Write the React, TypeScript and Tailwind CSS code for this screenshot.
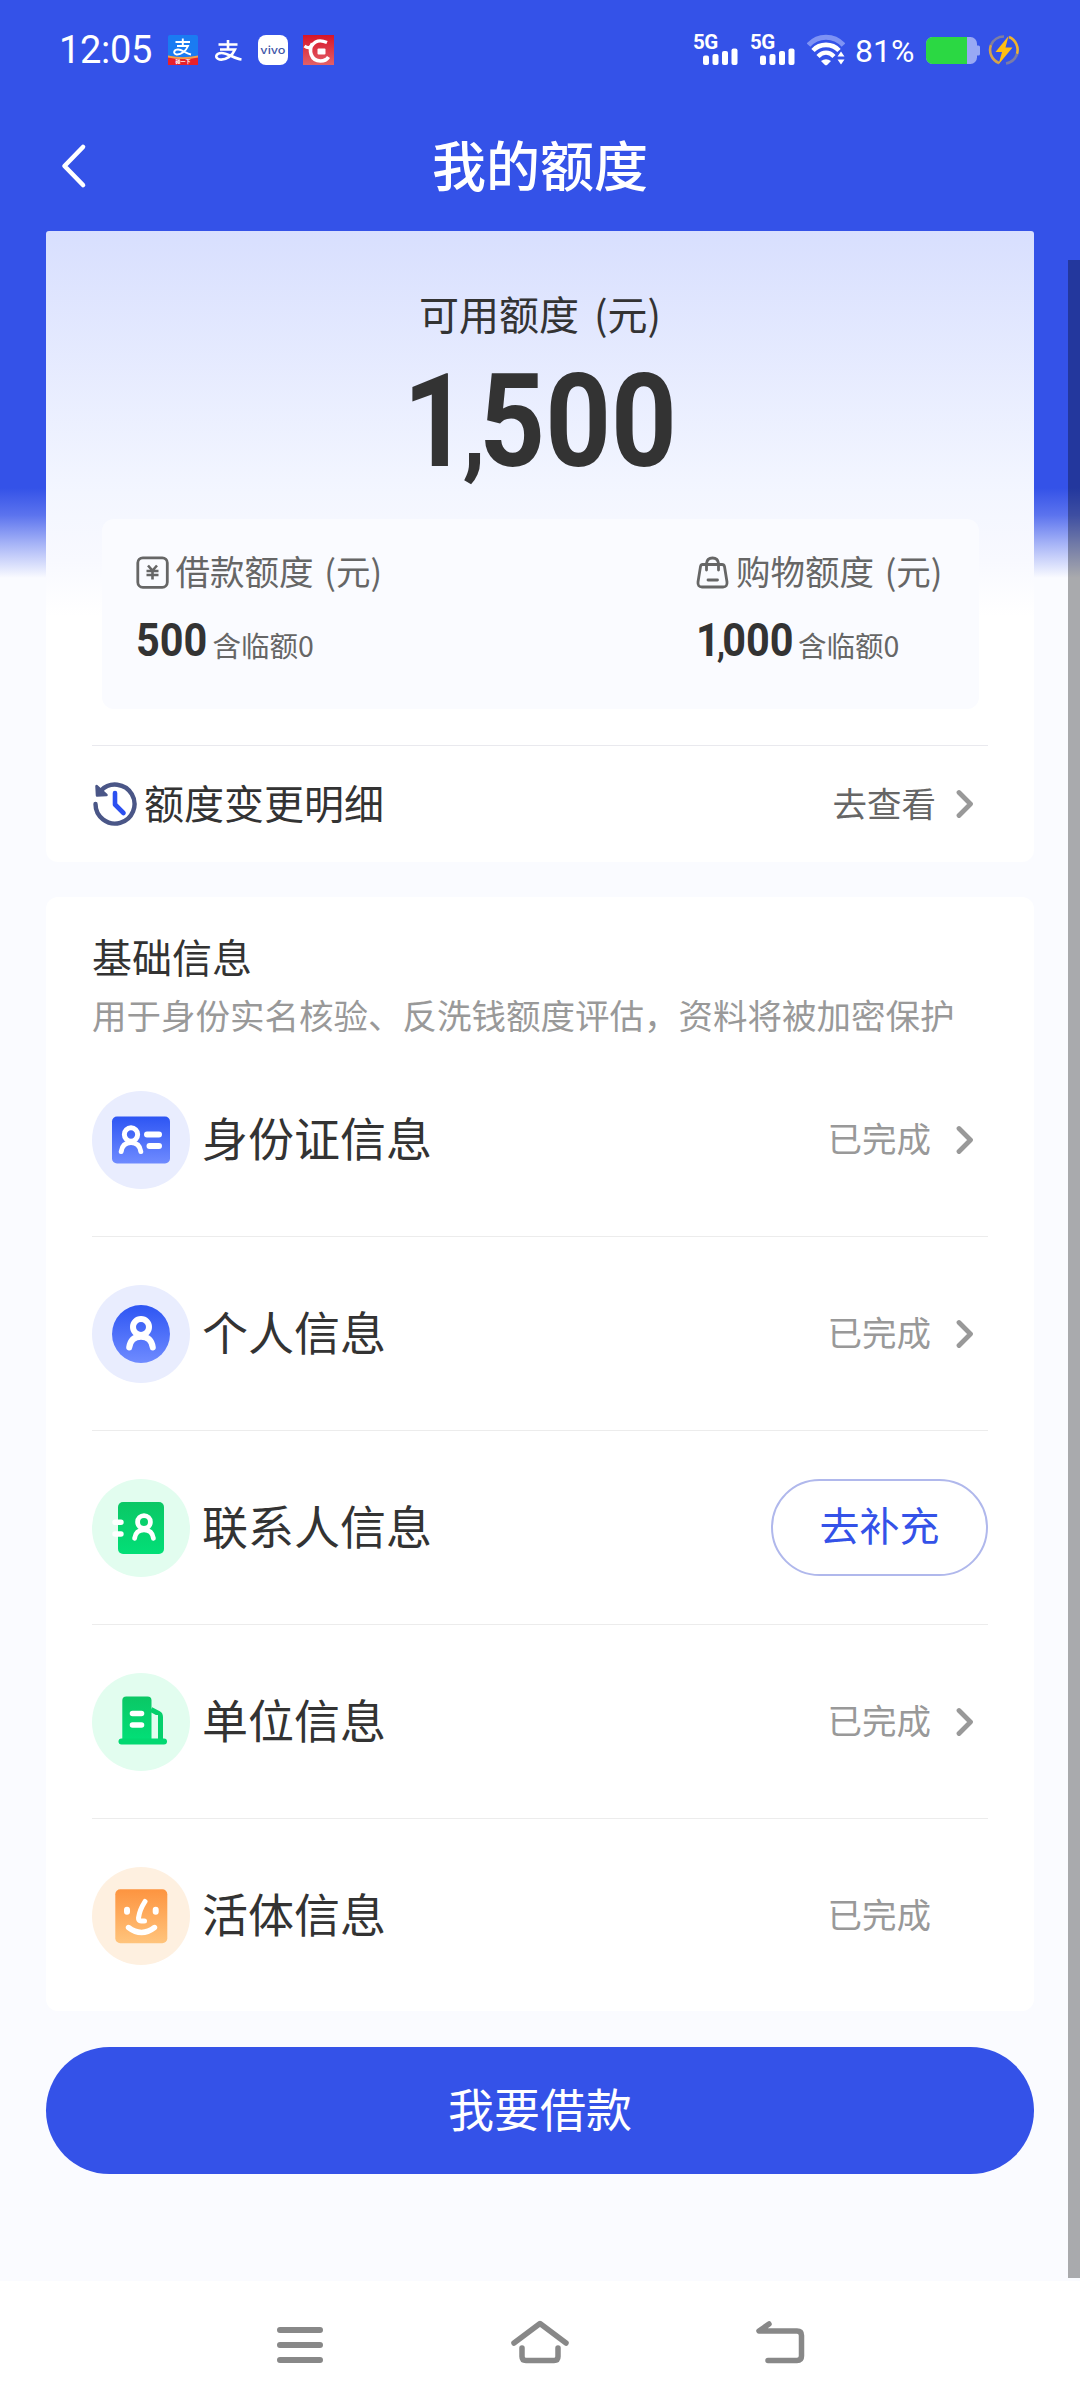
import { ReactNode } from "react";

type InfoRow = {
  label: string,
  icon: ReactNode,
  state: "done" | "todo",
  arrow: boolean,
};

function SignalIcon() {
  return (
    <div className="relative w-[46px] h-[32px]">
      <svg className="w-[46px] h-[32px]" viewBox="0 0 46 32" fill="#fff">
        <rect x="10" y="21.5" width="6" height="9.5" rx="2" />
        <rect x="19.5" y="20" width="6" height="11" rx="2" />
        <rect x="29" y="17" width="6" height="14" rx="2" />
        <rect x="38.5" y="14.5" width="6" height="16.5" rx="2" />
      </svg>
      <span className="absolute left-0 -top-[4px] text-[20.5px] leading-[24px] font-bold tracking-[-0.5px]">5G</span>
    </div>
  );
}

function WifiIcon() {
  return (
    <svg className="w-[38px] h-[32px]" viewBox="0 0 38 32" fill="none">
      <path d="M1.5 11C11 0.5 27 0.5 36.5 11" stroke="#7f93f4" strokeWidth="5" />
      <path d="M6 16.5C13 9 25 9 32 16.5" stroke="#fff" strokeWidth="4.6" />
      <path d="M11 22.5C16 17.5 22 17.5 27 22.5" stroke="#fff" strokeWidth="4.4" />
      <path d="M14 27Q19 23.5 24 27L20.3 30.8Q19 31.8 17.7 30.8Z" fill="#fff" />
      <path d="M30.5 22.5L34 17.5L37.5 22.5ZM30.5 25.5L34 30.5L37.5 25.5Z" fill="#fff" stroke="#3452e8" strokeWidth="1" paintOrder="stroke" />
    </svg>
  );
}

function BatteryIcon() {
  return (
    <svg className="w-[54px] h-[27px]" viewBox="0 0 54 27">
      <defs>
        <clipPath id="battery">
          <rect width="51" height="27" rx="6.5" />
        </clipPath>
      </defs>
      <path d="M50 8.5h2.5q1.5 0 1.5 1.5v7q0 1.5-1.5 1.5H50z" fill="#99a9f4" />
      <g clipPath="url(#battery)">
        <rect width="51" height="27" fill="#99a9f4" />
        <rect width="41" height="27" fill="#2bd843" />
      </g>
    </svg>
  );
}

function ChargeIcon() {
  return (
    <svg className="w-[32px] h-[32px]" viewBox="0 0 32 32" fill="none">
      <path d="M11 29A14 14 0 0 1 3 11" stroke="#d3a24e" strokeWidth="2.6" />
      <path d="M3 11A14 14 0 0 1 16 2.5" stroke="#7f7fa0" strokeWidth="2.6" />
      <path d="M21 3A14 14 0 0 1 29 20" stroke="#f0b32c" strokeWidth="2.6" />
      <path d="M29 20A14 14 0 0 1 18 29.5" stroke="#7b7ca6" strokeWidth="2.6" />
      <path d="M20.5 2L7.5 18H14L10.5 30.5L24.5 13.5H17.5Z" fill="#ffbe12" />
    </svg>
  );
}

function StatusBar() {
  return (
    <div className="flex flex-row items-center h-[100px] pl-[59px] pr-[60px] text-white font-[Roboto,sans-serif]">
      <span className="w-[109px] text-[38px] leading-none tracking-[-0.3px]">12:05</span>
      <div className="flex flex-row items-center gap-[15px]">
        <svg className="w-[30px] h-[30px]" viewBox="0 0 30 30">
          <rect width="30" height="30" rx="2" fill="#1a7bf2" />
          <path d="M0 21Q15 24.5 30 21V30H0Z" fill="#e8202a" />
          <path d="M0 20.5Q15 24 30 20.5V22.5Q15 25.5 0 22.5Z" fill="#f5a04a" />
          <g stroke="#fff" fill="none" strokeWidth="1.9">
            <path d="M7.5 7h14.5M14.8 3.5v7.5M9 11h11C18 16 13 20 8.5 19.5C4.5 18.5 6 14.5 10 14.5C14 14.5 18 18.5 23 19.5" />
          </g>
          <text x="15" y="28.3" fontSize="5" fontWeight="700" textAnchor="middle" fill="#fff" fontFamily="Noto Sans CJK SC, sans-serif">碰一下</text>
        </svg>
        <svg className="w-[30px] h-[30px]" viewBox="0 0 30 30" fill="none" stroke="#fff" strokeWidth="2.6">
          <path d="M5.5 9.5h19M15 5v9.5M7 14.5h15C19.5 20.5 13 25.5 6.5 24.5C1 23 3 18 8.5 18C14.5 18 21 23.5 28.5 24.5" />
        </svg>
        <div className="flex items-center justify-center w-[30px] h-[30px] rounded-[8px] bg-white">
          <span className="scale-x-[1.15] pb-[1px] font-[Inter,sans-serif] text-[11px] leading-[14px] font-medium text-[#3f56a8]">vivo</span>
        </div>
        <svg className="w-[31px] h-[30px]" viewBox="0 0 31 30" fill="none">
          <defs>
            <linearGradient id="red" x1="0" y1="0" x2="0" y2="1">
              <stop offset="0" stopColor="#d81428" />
              <stop offset="1" stopColor="#e26068" />
            </linearGradient>
          </defs>
          <rect width="31" height="30" fill="url(#red)" />
          <path d="M1.5 11Q6 14.5 9 10.5Q14 3 24 7.5" stroke="#fff" strokeWidth="3.2" />
          <path d="M9.5 8.5C5.5 15 7.5 26 17.5 26Q23 26 25.5 22" stroke="#fff" strokeWidth="3.6" />
          <rect x="14.5" y="13.5" width="8" height="6" rx="1" fill="#fff" />
        </svg>
      </div>
      <div className="flex flex-row items-center ml-auto">
        <SignalIcon />
        <div className="w-[11px]" />
        <SignalIcon />
        <div className="w-[11px]" />
        <WifiIcon />
        <span className="w-[81px] pl-[10px] pt-[2px] text-[32px] leading-none">81%</span>
        <BatteryIcon />
        <div className="w-[8px]" />
        <ChargeIcon />
      </div>
    </div>
  );
}

function Chevron() {
  return (
    <svg className="w-[20px] h-[32px]" viewBox="0 0 20 32" fill="none" stroke="#999" strokeWidth="4.8" strokeLinecap="round" strokeLinejoin="round">
      <path d="M3 4.5L14.5 16L3 27.500" />
    </svg>
  );
}

function Person({ x, y, scale }: { x: number, y: number, scale: number }) {
  return (
    <g
      transform={`translate(${x} ${y}) scale(${scale})`}
      fill="none" stroke="#fff" strokeWidth="6" strokeLinecap="round"
    >
      <circle r="8" />
      <path d="M-11.800 20.500C-10.800 13-6.500 9.800 0 9.800S10.800 13 11.800 20.500" />
    </g>
  );
}

function RowIcon({ bg, children }: { bg: string, children: ReactNode }) {
  return (
    <svg className="w-[98px] h-[98px]" viewBox="0 0 98 98">
      <defs>
        <linearGradient id="blue" x1="0" y1="0" x2="0" y2="1">
          <stop offset="0" stopColor="#2d55f3" />
          <stop offset="1" stopColor="#6f8bff" />
        </linearGradient>
        <linearGradient id="green" x1="0" y1="0" x2="0" y2="1">
          <stop offset="0" stopColor="#0bc765" />
          <stop offset="1" stopColor="#02df77" />
        </linearGradient>
        <linearGradient id="orange" x1="0" y1="0" x2="0" y2="1">
          <stop offset="0" stopColor="#fd9440" />
          <stop offset="1" stopColor="#ffc47c" />
        </linearGradient>
      </defs>
      <circle cx="49" cy="49" r="49" fill={bg} />
      {children}
    </svg>
  );
}

const rows: InfoRow[] = [
  {
    label: "身份证信息",
    state: "done",
    arrow: true,
    icon: (
      <RowIcon bg="#e9edfe">
        <rect x="20" y="25.5" width="58" height="47" rx="5" fill="url(#blue)" />
        <Person x={39} y={43.5} scale={0.83} />
        <path d="M55 43.5h12M57.5 55h9.5" stroke="#fff" strokeWidth="6" strokeLinecap="round" />
      </RowIcon>
    ),
  },
  {
    label: "个人信息",
    state: "done",
    arrow: true,
    icon: (
      <RowIcon bg="#e9edfe">
        <circle cx="49" cy="49" r="29" fill="url(#blue)" />
        <Person x={49} y={42} scale={1} />
      </RowIcon>
    ),
  },
  {
    label: "联系人信息",
    state: "todo",
    arrow: false,
    icon: (
      <RowIcon bg="#e2fdef">
        <rect x="26" y="23" width="46" height="52" rx="5" fill="url(#green)" />
        <Person x={52} y={43} scale={0.8} />
        <path d="M23 43.200h6M23 55h6" stroke="#fff" strokeWidth="5.4" strokeLinecap="round" />
      </RowIcon>
    ),
  },
  {
    label: "单位信息",
    state: "done",
    arrow: true,
    icon: (
      <RowIcon bg="#e2fdef">
        <path d="M30.3 67V27.5q0-4 4-4H55.5q4 0 4 4V67z" fill="url(#green)" />
        <path d="M59 36.5L66.5 40.5q2 1.2 2 3.5V67" fill="none" stroke="#05d06c" strokeWidth="5" />
        <rect x="60" y="42" width="6" height="24" fill="#e2fdef" />
        <rect x="26.5" y="65.5" width="48.5" height="6" rx="3" fill="#02d871" />
        <path d="M40.5 40.5h9M40.5 52h9" stroke="#fff" strokeWidth="5.6" strokeLinecap="round" />
      </RowIcon>
    ),
  },
  {
    label: "活体信息",
    state: "done",
    arrow: false,
    icon: (
      <RowIcon bg="#fef0e0">
        <rect x="23.3" y="22.3" width="52" height="54" rx="5" fill="url(#orange)" />
        <g fill="none" stroke="#fff" strokeLinecap="round" strokeLinejoin="round">
          <path d="M35 42.7v2M63.7 42.7v2" strokeWidth="6" />
          <path d="M53 34.5Q47.5 43 46.5 51Q46.3 54 49 54H52.5" strokeWidth="5" />
          <path d="M36.5 60.5Q49.5 70.5 62.5 60.5" strokeWidth="5.4" />
        </g>
      </RowIcon>
    ),
  },
];

function Quota({ icon, title, amountClass, amount }: {
  icon: ReactNode,
  title: string,
  amountClass: string,
  amount: ReactNode,
}) {
  return (
    <div className="flex flex-col">
      <div className="flex flex-row items-center h-[50px] text-[34.5px] leading-none text-[#666]">
        {icon}
        <span className="pl-[7px] pb-[4px] [word-spacing:3px]">{title}</span>
      </div>
      <div className="flex flex-row items-baseline pt-[19px]">
        <div className={amountClass}>
          <span className="inline-block origin-left scale-x-[0.9] font-[Roboto,sans-serif] font-bold text-[46px] leading-[48px] text-[#333]">
            {amount}
          </span>
        </div>
        <span className="relative top-[1px] text-[28.5px] leading-none text-[#666]">含临额0</span>
      </div>
    </div>
  );
}

export default function App() {
  return (
    <div
      className="
        relative flex flex-col w-[1080px] h-[2408px] overflow-hidden
        bg-[linear-gradient(#3452e8_0px,#3452e8_488px,#5b73ee_515px,#a9b6f7_545px,#fafbff_578px)]
        font-['Noto_Sans_CJK_SC',sans-serif] text-[#333]
      "
    >
      <StatusBar />
      <header className="flex flex-row items-center h-[131px] px-[59px] text-white">
        <svg className="w-[30px] h-[46px]" viewBox="0 0 30 46" fill="none" stroke="#fff" strokeWidth="4.6" strokeLinecap="round" strokeLinejoin="round">
          <path d="M24 4L5.5 23L24 42" />
        </svg>
        <h1 className="flex-1 pr-[30px] pb-[4px] text-center text-[54px] leading-none font-medium">我的额度</h1>
      </header>

      <section
        className="
          flex flex-col items-center h-[631px] mx-[46px] px-[46px] rounded-t-[3px] rounded-b-[12px]
          bg-[linear-gradient(#d8dffe_0px,#f3f6ff_260px,#f8f9ff_330px,#ffffff_385px)]
        "
      >
        <div className="pt-[62px] text-[40px] leading-none [word-spacing:6px]">可用额度 (元)</div>
        <div className="origin-center scale-x-[0.89] pt-[16px] font-[Roboto,sans-serif] font-bold text-[129px] leading-[145px]">
          1<span className="-ml-[7px] -mr-[7px] text-[105px] leading-none">,</span>500
        </div>
        <div className="flex flex-row justify-between w-[877px] h-[191px] mt-[25px] pl-[34px] pr-[36px] pt-[28px] rounded-[12px] bg-[#fafbff]">
          <Quota
            title="借款额度 (元)"
            amount="500"
            amountClass="w-[77px]"
            icon={
              <svg className="w-[33px] h-[33px]" viewBox="0 0 33 33" fill="none" stroke="#666" strokeWidth="2.8">
                <rect x="1.8" y="1.8" width="29.5" height="29.5" rx="5" />
                <path d="M12 9.5L16.5 14.5L21 9.5M10.500 15h12M10.500 19h12M16.500 14.500V23.500" strokeWidth="2.6" />
              </svg>
            }
          />
          <Quota
            title="购物额度 (元)"
            amount={<>1<span className="-ml-[3px] -mr-[3px] text-[36px] leading-none">,</span>000</>}
            amountClass="w-[102px]"
            icon={
              <svg className="w-[33px] h-[33px]" viewBox="0 0 33 33" fill="none" stroke="#666" strokeWidth="2.8" strokeLinecap="round" strokeLinejoin="round">
                <path d="M6.5 8.5H26q2 0 2.5 2L31 26q.5 5-4 5H6q-4.5 0-4-5L4.5 10.5q.5-2 2-2Z" />
                <path d="M10.5 14V7.5Q11 2 16.5 2T22.5 7.5V14M12 24h9.5" />
              </svg>
            }
          />
        </div>
        <div className="flex flex-row items-center w-full h-[117px] mt-[36px] border-t border-[#e9e9ee]">
          <svg className="w-[46px] h-[46px]" viewBox="0 0 46 46" fill="none">
            <path d="M3.5 23A19.5 19.5 0 1 0 9 9.500" stroke="#4a5687" strokeWidth="4.4" strokeLinecap="round" />
            <path d="M4.5 5L5 14.5L14.5 14Z" fill="#4a5687" stroke="#4a5687" strokeWidth="2.5" strokeLinejoin="round" />
            <path d="M23 12V23.5L31.5 32" stroke="#2c50f0" strokeWidth="4.6" strokeLinecap="round" strokeLinejoin="round" />
          </svg>
          <span className="pl-[6px] pb-[4px] text-[40px] leading-none">额度变更明细</span>
          <span className="ml-auto pr-[20px] pb-[4px] text-[34.5px] leading-none text-[#666]">去查看</span>
          <Chevron />
          <div className="w-[12px]" />
        </div>
      </section>

      <section className="h-[1114px] mx-[46px] mt-[35px] px-[46px] pt-[31px] rounded-[12px] bg-white">
        <h2 className="flex items-center h-[60px] pb-[4px] text-[40px] leading-none">基础信息</h2>
        <p className="flex items-center h-[56px] pb-[4px] text-[34.5px] leading-none whitespace-nowrap text-[#999]">
          用于身份实名核验、反洗钱额度评估，资料将被加密保护
        </p>
        <ul className="-mt-px">
          {rows.map(row => (
            <li
              key={row.label}
              className="flex flex-row items-center h-[194px] border-b border-[#ececec] last:border-transparent"
            >
              {row.icon}
              <span className="pl-[12px] pb-[8px] text-[46px] leading-none">{row.label}</span>
              {row.state === "todo"
                ? <button
                    className="
                      ml-auto w-[217px] h-[97px] pb-[7px] rounded-full border-2 border-[#b0b8ec]
                      text-[40px] leading-none text-[#3452e8]
                    "
                  >
                    去补充
                  </button>
                : <>
                    <span className="ml-auto pr-[25px] pb-[4px] text-[34.5px] leading-none text-[#999]">已完成</span>
                    <div className="w-[32px]">{row.arrow && <Chevron />}</div>
                  </>
              }
            </li>
          ))}
        </ul>
      </section>

      <button className="h-[127px] mx-[46px] mt-[36px] pb-[8px] shrink-0 rounded-full bg-[#3452e8] text-[46px] leading-none text-white">
        我要借款
      </button>

      <nav className="flex flex-row items-center justify-center gap-[180px] h-[127px] mt-auto shrink-0 bg-white">
        <svg className="w-[60px] h-[50px]" viewBox="0 0 60 50" stroke="#888" strokeWidth="6" strokeLinecap="round">
          <path d="M10 10H50M10 25H50M10 40H50" />
        </svg>
        <svg className="w-[60px] h-[50px]" viewBox="0 0 60 50" fill="none" stroke="#888" strokeWidth="5.5" strokeLinecap="round" strokeLinejoin="round">
          <path d="M4 23L30 3.5L56 23" />
          <path d="M12 28V36.500Q12 40.500 16 40.500H44Q48 40.500 48 36.500V28" />
        </svg>
        <svg className="w-[60px] h-[50px]" viewBox="0 0 60 50" fill="none" stroke="#888" strokeWidth="5.5" strokeLinecap="round" strokeLinejoin="round">
          <path d="M19 4L9 11H47Q51.500 11 51.500 15.500V36Q51.500 40.500 47 40.500H18" />
        </svg>
      </nav>

      {/* scrollbar thumb */}
      <div className="absolute right-0 top-[260px] w-[12px] h-[2018px] bg-black/32" />
    </div>
  );
}
